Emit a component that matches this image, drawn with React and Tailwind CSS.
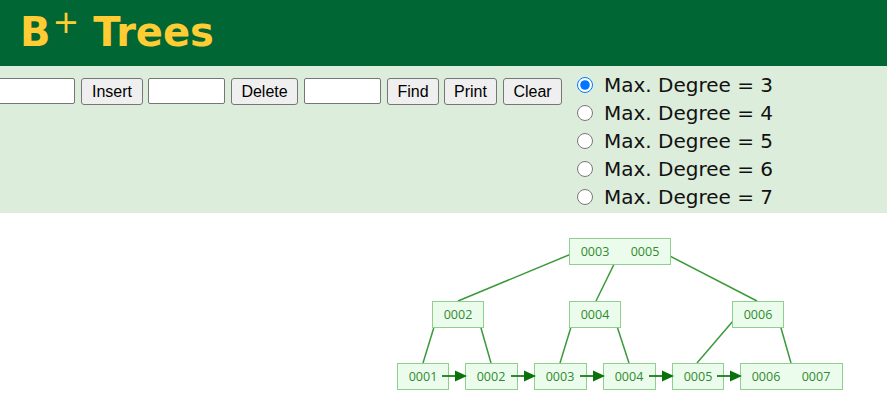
import React from 'react';

const leaves = [
  { x: 397, w: 51, keys: ['0001'] },
  { x: 465, w: 52, keys: ['0002'] },
  { x: 534, w: 52, keys: ['0003'] },
  { x: 603, w: 52, keys: ['0004'] },
  { x: 672, w: 51, keys: ['0005'] },
  { x: 740, w: 102, keys: ['0006', '0007'] },
];

const inner = [
  { x: 569, y: 238, w: 101, keys: ['0003', '0005'] },
  { x: 432, y: 301, w: 51, keys: ['0002'] },
  { x: 569, y: 301, w: 51, keys: ['0004'] },
  { x: 732, y: 301, w: 51, keys: ['0006'] },
];

const edges = [
  [576, 252, 458, 301],
  [620, 252, 596, 301],
  [664, 253, 757, 301],
  [438, 314, 423, 363],
  [477, 314, 491, 363],
  [575, 314, 560, 363],
  [613, 314, 629, 363],
  [739, 314, 697, 363],
  [777, 314, 791, 363],
];

function Node({ x, y, w, keys }) {
  return (
    <g>
      <rect x={x + 0.5} y={y + 0.5} width={w} height={26} fill="#ecfcec" stroke="#8fd08f" strokeWidth="1" />
      {keys.map((k, i) => (
        <text
          key={k + i}
          x={x + 26 + i * 50}
          y={y + 17.5}
          textAnchor="middle"
          fontSize="12.5"
          fontFamily="'Open Sans', 'Noto Sans', sans-serif"
          fill="#2e8b2e"
        >
          {k}
        </text>
      ))}
    </g>
  );
}

function TreeCanvas() {
  return (
    <svg width="887" height="194" viewBox="0 213 887 194" className="block">
      {edges.map(([x1, y1, x2, y2], i) => (
        <line key={i} x1={x1} y1={y1} x2={x2} y2={y2} stroke="#3a9a3a" strokeWidth="1.5" />
      ))}
      {inner.map((n, i) => <Node key={i} {...n} />)}
      {leaves.map((n, i) => <Node key={'l' + i} x={n.x} y={363} w={n.w} keys={n.keys} />)}
      {leaves.slice(0, -1).map((n, i) => {
        const start = n.x + n.w - 6;
        const end = leaves[i + 1].x + 2;
        return (
          <g key={'a' + i}>
            <line x1={start} y1={376} x2={end - 8} y2={376} stroke="#1d7a1d" strokeWidth="1.8" />
            <polygon points={`${end - 12},${370.5} ${end},${376} ${end - 12},${381.5}`} fill="#0a720a" />
          </g>
        );
      })}
    </svg>
  );
}

const btn =
  'h-[27px] rounded-[3px] border border-[#767676] bg-[#efefef] text-[16px] text-black font-["Liberation_Sans",Arial,sans-serif] leading-none';
const inp = 'h-[26px] w-[77px] border border-[#767676] bg-white rounded-[2px]';

export default function App() {
  return (
    <div className="w-[887px] h-[407px] overflow-hidden bg-white">
      <div className="h-[66px] bg-[#006633] pl-[20px] pt-[6px]">
        <h1 className='text-[40px] leading-[52px] font-bold text-[#ffcc33] font-["DejaVu_Sans",Verdana,sans-serif] whitespace-nowrap'>
          B<sup className="text-[32px] font-normal top-[-13px] ml-[2px]">+</sup> Trees
        </h1>
      </div>
      <div className="h-[147px] bg-[#ddeddb] pt-[5px] flex">
        <div className="flex items-start mt-[7px] ml-[-2px]">
          <input className={inp} />
          <button className={`${btn} w-[62px] ml-[6px]`}>Insert</button>
          <input className={`${inp} ml-[5px]`} />
          <button className={`${btn} w-[67px] ml-[6px]`}>Delete</button>
          <input className={`${inp} ml-[6px]`} />
          <button className={`${btn} w-[52px] ml-[6px]`}>Find</button>
          <button className={`${btn} w-[53px] ml-[5px]`}>Print</button>
          <button className={`${btn} w-[59px] ml-[6px]`}>Clear</button>
        </div>
        <div className="flex flex-col ml-[15px]">
          {[3, 4, 5, 6, 7].map((d) => (
            <label key={d} className='h-[28px] flex items-center text-[20px] text-[#111] font-["DejaVu_Sans",Verdana,sans-serif] whitespace-nowrap'>
              <input type="radio" name="deg" defaultChecked={d === 3} className="w-[16px] h-[16px] m-0 mr-[11px]" />
              Max. Degree = {d}
            </label>
          ))}
        </div>
      </div>
      <TreeCanvas />
    </div>
  );
}
